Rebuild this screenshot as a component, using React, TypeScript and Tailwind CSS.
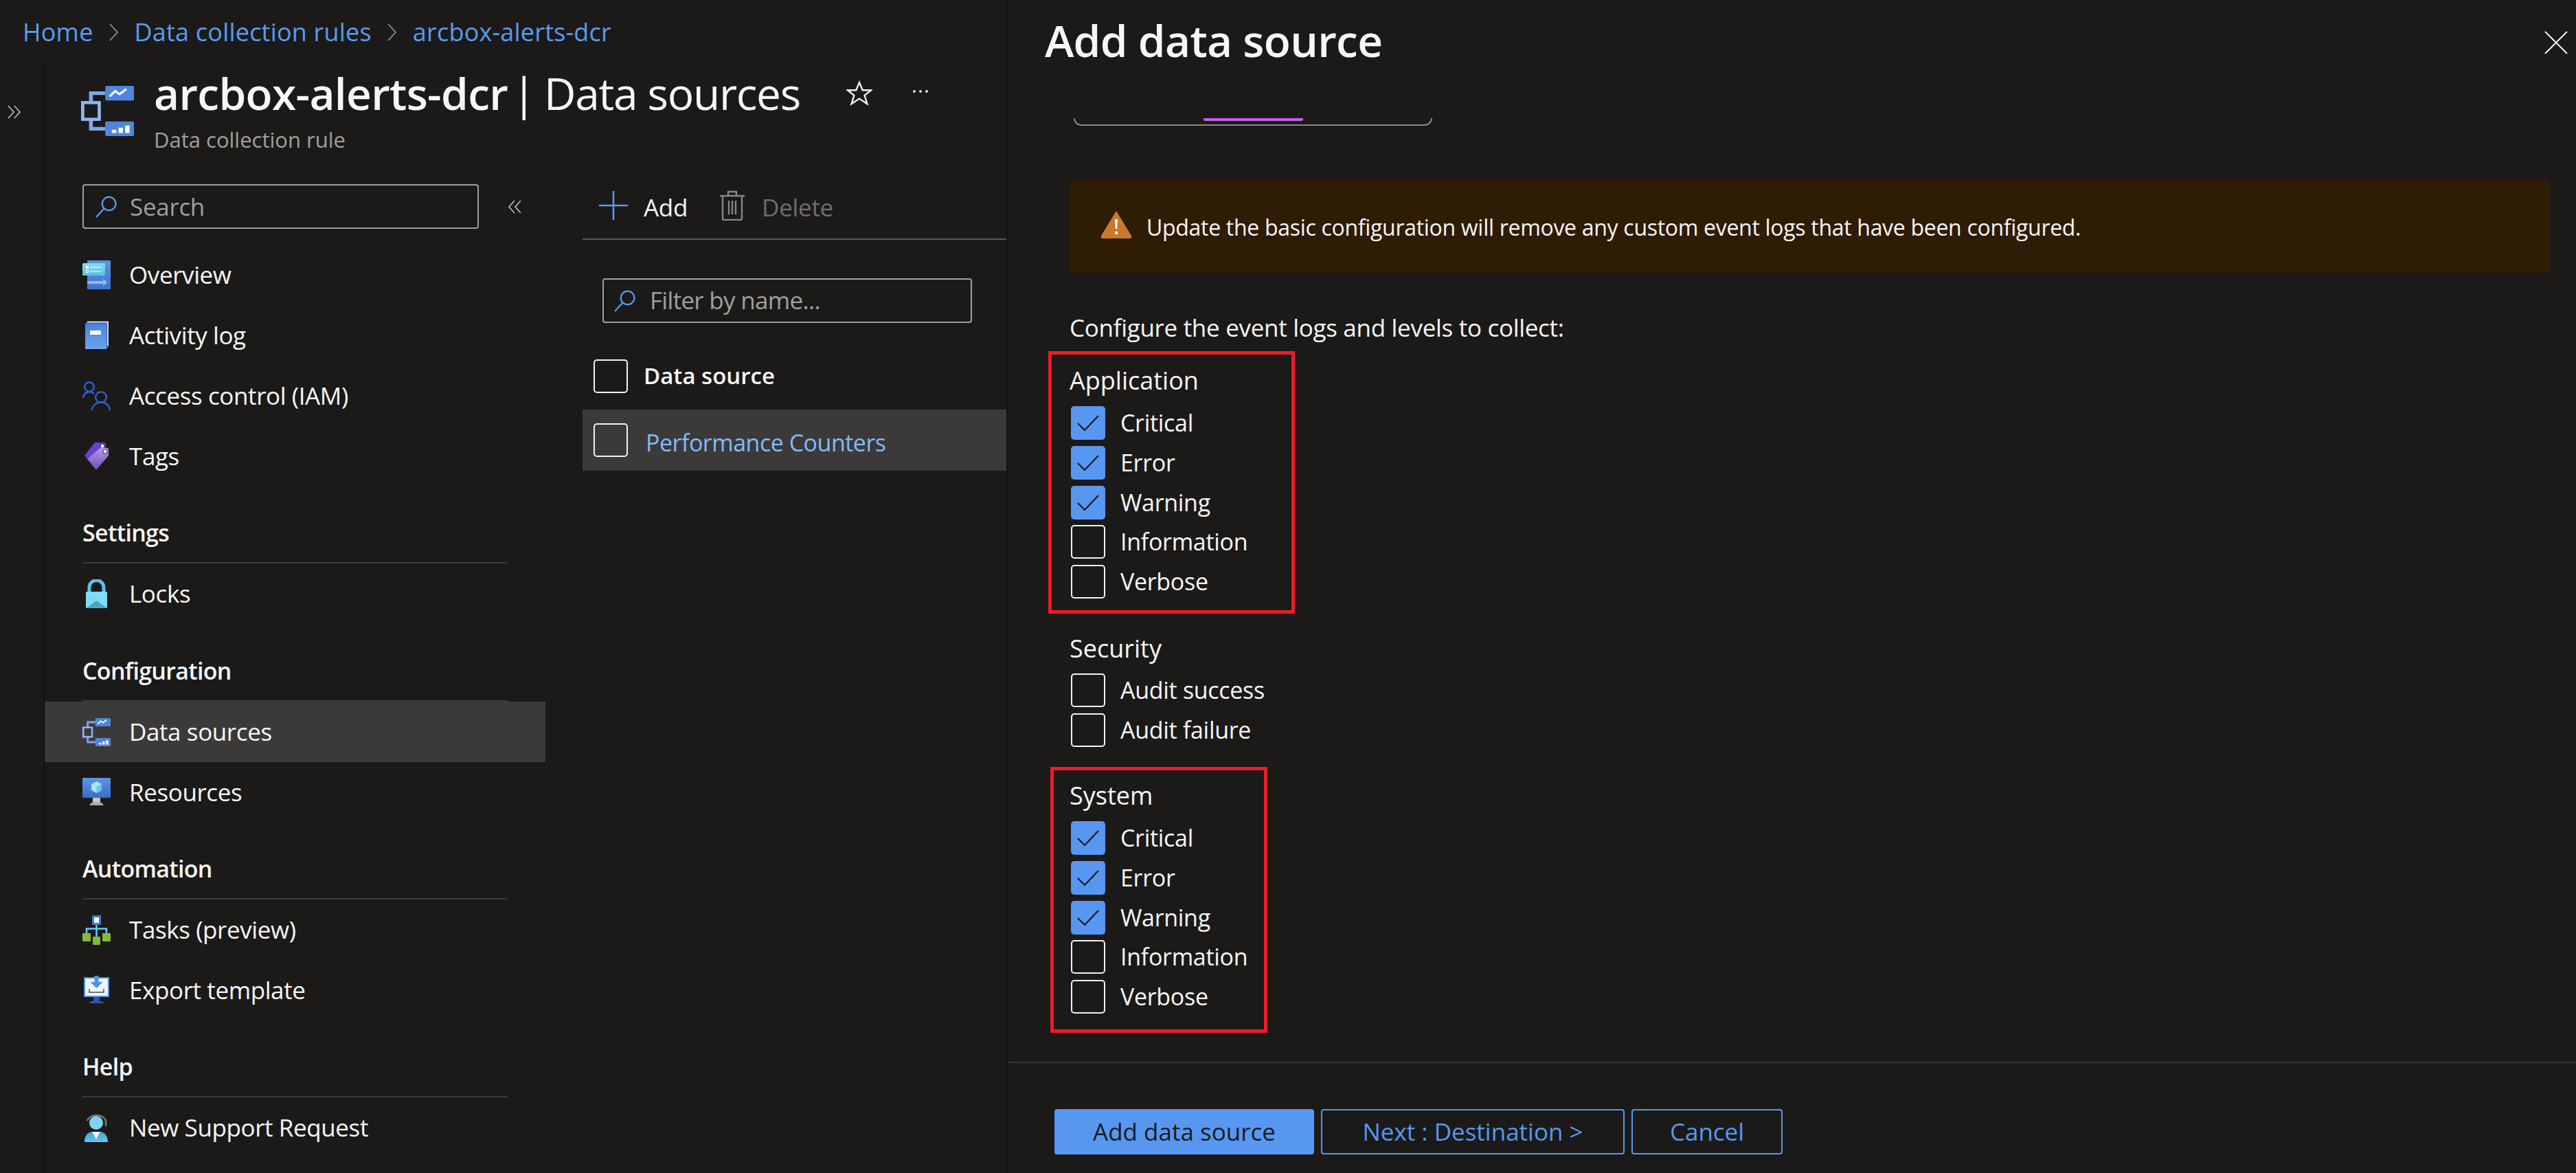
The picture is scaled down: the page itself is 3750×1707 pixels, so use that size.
import React from "react";

const DataRule = ({ c = "w-[41px] h-[41px]" }: { c?: string }) => (
  <svg viewBox="0 0 48 48" className={`${c} shrink-0`} preserveAspectRatio="none">
    <path d="M9 16V7H22M9 32V41H22" fill="none" stroke="#7ea6ea" strokeWidth="3.5" />
    <rect x="1.5" y="16" width="15" height="16" fill="none" stroke="#8fb4ee" strokeWidth="3" />
    <rect x="22" y="0" width="26" height="14" rx="1" fill="#4f86dc" />
    <path d="M26 10l5-5 4 3 6-5" fill="none" stroke="#fff" strokeWidth="2" />
    <rect x="22" y="34" width="26" height="14" rx="1" fill="#4f86dc" />
    <rect x="28" y="42" width="4" height="3" fill="#fff" />
    <rect x="34" y="40" width="4" height="5" fill="#fff" />
    <rect x="40" y="38" width="4" height="7" fill="#fff" />
  </svg>
);

const Overview = () => (
  <svg viewBox="0 0 41 42" className="w-[41px] h-[42px] shrink-0">
    <defs>
      <linearGradient id="ovA" x1="0" y1="0" x2="0" y2="1"><stop offset="0" stopColor="#5a93e6" /><stop offset="1" stopColor="#3f74cc" /></linearGradient>
      <linearGradient id="ovB" x1="0" y1="0" x2="0" y2="1"><stop offset="0" stopColor="#84dcf2" /><stop offset="1" stopColor="#58bfe0" /></linearGradient>
    </defs>
    <rect x="7" y="0" width="34" height="42" rx="1" fill="url(#ovA)" />
    <rect x="0" y="4" width="33" height="18" rx="1.5" fill="url(#ovB)" />
    <rect x="5" y="8" width="4" height="4" fill="#fff" />
    <rect x="5.500" y="14.500" width="3" height="3" fill="none" stroke="#fff" />
    <path d="M11 10h16M11 16h16" stroke="#fff" strokeWidth="1.200" />
    <path d="M7 30h23v-3.500l6 5.500-6 5.500V34H7z" fill="#93b8f0" />
  </svg>
);
const ActivityLog = () => (
  <svg viewBox="0 0 41 42" className="w-[41px] h-[42px] shrink-0">
    <defs>
      <linearGradient id="alA" x1="0" y1="0" x2="0" y2="1"><stop offset="0" stopColor="#4a83da" /><stop offset="1" stopColor="#6ba3ea" /></linearGradient>
    </defs>
    <path d="M7 1h31v37l-4 3H4V4z" fill="#3468bb" />
    <path d="M7 1.500h30V36" fill="none" stroke="#fff" strokeWidth="1.500" />
    <path d="M4 4h31v37H5a1 1 0 0 1-1-1z" fill="url(#alA)" />
    <rect x="11" y="14" width="16" height="6" fill="#fff" />
  </svg>
);
const Access = () => (
  <svg viewBox="0 0 41 42" className="w-[41px] h-[42px] shrink-0" fill="none" stroke="#2f62d0" strokeWidth="2.400">
    <circle cx="10" cy="8" r="6.800" />
    <path d="M1 24a9.500 9.500 0 0 1 16-6" />
    <circle cx="27" cy="23" r="7.800" />
    <path d="M14 42a13 11.500 0 0 1 26 0" />
  </svg>
);
const Tags = () => (
  <svg viewBox="0 0 41 42" className="w-[41px] h-[42px] shrink-0">
    <defs>
      <linearGradient id="tgA" x1="0" y1="0" x2="0" y2="1"><stop offset="0" stopColor="#b69ae4" /><stop offset="1" stopColor="#6e4fb6" /></linearGradient>
    </defs>
    <path d="M18 1h13a3 3 0 0 1 3 3v8L12 30 3 20z" fill="#6a3fd4" />
    <circle cx="29" cy="6" r="3" fill="#fff" stroke="#3f1f98" strokeWidth="1.200" />
    <path d="M27 8l9 1a2 2 0 0 1 2 2v9L20 41 7 25z" fill="url(#tgA)" />
    <circle cx="33" cy="14" r="3" fill="#fff" stroke="#4f2fa6" strokeWidth="1.200" />
  </svg>
);
const Lock = () => (
  <svg viewBox="0 0 41 42" className="w-[41px] h-[42px] shrink-0">
    <path d="M10 20V12a10.500 10.500 0 0 1 21 0v8" fill="none" stroke="#5cc0ea" strokeWidth="5" />
    <rect x="5" y="18" width="31" height="24" rx="1.500" fill="#7fdcf8" />
    <path d="M5 42l15.500-11L36 42z" fill="#4fa5c8" />
  </svg>
);
const Resources = () => (
  <svg viewBox="0 0 41 42" className="w-[41px] h-[42px] shrink-0">
    <defs>
      <linearGradient id="rsA" x1="0" y1="0" x2="0" y2="1"><stop offset="0" stopColor="#5a96ea" /><stop offset="1" stopColor="#3a6cc4" /></linearGradient>
    </defs>
    <rect x="0" y="0" width="41" height="29" rx="1" fill="url(#rsA)" />
    <rect x="15" y="29" width="11" height="7" fill="#c4c4c4" />
    <path d="M13 36h15l3 4H10z" fill="#a8a8a8" />
    <path d="M20.500 5l7.500 4v9l-7.500 4-7.500-4V9z" fill="#a6e4f6" />
    <path d="M20.500 13l7.500-4v9l-7.500 4z" fill="#63c9e8" />
  </svg>
);
const TasksI = () => (
  <svg viewBox="0 0 41 43" className="w-[41px] h-[43px] shrink-0">
    <path d="M20.500 14v18M6 27v-7.500h29V27" fill="none" stroke="#63d0f0" strokeWidth="2.500" />
    <rect x="15.500" y="1.500" width="10" height="11" fill="#fff" stroke="#3d78d8" strokeWidth="3" />
    <rect x="0" y="26" width="12" height="12" rx="1" fill="#84b93e" />
    <rect x="15" y="31" width="11" height="12" rx="1" fill="#84b93e" />
    <rect x="29" y="26" width="12" height="12" rx="1" fill="#84b93e" />
  </svg>
);
const ExportI = () => (
  <svg viewBox="0 0 41 42" className="w-[41px] h-[42px] shrink-0">
    <rect x="3" y="3" width="35" height="27" fill="#eef7fc" stroke="#4f92e6" strokeWidth="2" />
    <rect x="16" y="31" width="9" height="7" fill="#2f55a8" />
    <path d="M10 40h21v-1l-3-2H13l-3 2z" fill="#2f55a8" />
    <path d="M17.500 0h6v9h6l-9 9-9-9h6z" fill="#4f92e6" />
    <path d="M10 19v5h21v-5" fill="none" stroke="#777" strokeWidth="2" />
  </svg>
);
const Support = () => (
  <svg viewBox="0 0 41 42" className="w-[41px] h-[42px] shrink-0">
    <defs>
      <linearGradient id="spA" x1="0" y1="0" x2="0" y2="1"><stop offset="0" stopColor="#3f9dd4" /><stop offset="1" stopColor="#6cc6ea" /></linearGradient>
    </defs>
    <path d="M7 11a14 11 0 0 1 27 0v8" fill="none" stroke="#777" strokeWidth="2.500" />
    <circle cx="20" cy="14" r="10" fill="#7fd3f2" />
    <path d="M3 42c0-11 6-15 12-15h10c6 0 12 4 12 15a1 1 0 0 1-1 0z" fill="url(#spA)" />
    <path d="M14 27h12l-6 11z" fill="#eaf6fb" />
  </svg>
);
const SearchI = ({ c }: { c: string }) => (
  <svg viewBox="0 0 32 32" className={`${c} shrink-0`} fill="none" stroke="#5a9bf0" strokeWidth="2.200">
    <circle cx="20" cy="12" r="9.500" />
    <path d="M13 19L2 31" />
  </svg>
);
const Chevrons = ({ left }: { left?: boolean }) => (
  <svg viewBox="0 0 22 22" className="w-[22px] h-[22px]" fill="none" stroke="#c8c6c4" strokeWidth="1.500">
    {left ? <path d="M10 2L2 11l8 9M19 2l-8 9 8 9" /> : <path d="M2 2l8 9-8 9M11 2l8 9-8 9" />}
  </svg>
);

const NavItem = ({ icon, label, active }: { icon: React.ReactNode; label: string; active?: boolean }) => (
  <div className={`h-[88px] pl-[55px] flex items-center gap-[27px] text-[35px] text-[#f8f7f6] ${active ? "bg-[#3b3a39]" : ""}`}>
    <span className="w-[41px] flex justify-center">{icon}</span>
    <span className="tracking-[-0.4px]">{label}</span>
  </div>
);
const Heading = ({ label, cls }: { label: string; cls: string }) => (
  <div className={`h-[88px] mx-[55px] flex items-center text-[34px] font-semibold tracking-[-0.700px] text-[#f8f7f6] border-b-2 border-[#3d3c3b] ${cls}`}>
    {label}
  </div>
);

const Box = ({ on }: { on?: boolean }) =>
  on ? (
    <span className="w-[50px] h-[49px] rounded-[5px] bg-[#5797f2] shrink-0 flex items-center justify-center">
      <svg viewBox="0 0 50 49" className="w-[50px] h-[49px]" fill="none" stroke="#1b1a19" strokeWidth="2.200">
        <path d="M10 25l10 10 20-21" />
      </svg>
    </span>
  ) : (
    <span className="w-[50px] h-[49px] rounded-[5px] border-2 border-[#f3f2f1] shrink-0" />
  );

const Check = ({ label, on }: { label: string; on?: boolean }) => (
  <div className="h-[49px] flex items-center gap-[22px] text-[34px] tracking-[-0.3px] text-[#f8f7f6]">
    <Box on={on} />
    <span>{label}</span>
  </div>
);

const Levels = () => (
  <div className="flex flex-col gap-[8.800px] pl-[2px]">
    <Check label="Critical" on />
    <Check label="Error" on />
    <Check label="Warning" on />
    <Check label="Information" />
    <Check label="Verbose" />
  </div>
);

export default function App() {
  return (
    <div
      className="w-[3750px] h-[1707px] flex overflow-hidden bg-[#1b1a19] text-[#f8f7f6]"
      style={{ fontFamily: '"Open Sans", "Noto Sans", sans-serif' }}
    >
      {/* Left: portal blade */}
      <div className="w-[1465px] shrink-0 flex flex-col">
        <div className="h-[95px] pl-[33px] flex items-center gap-[22px] text-[36px] tracking-[0.2px] text-[#5a9bf0] pb-[2px]">
          <span>Home</span>
          <svg viewBox="0 0 16 30" className="w-[16px] h-[30px]" fill="none" stroke="#a19f9d" strokeWidth="1.500"><path d="M2 3l11 12L2 27" /></svg>
          <span>Data collection rules</span>
          <svg viewBox="0 0 16 30" className="w-[16px] h-[30px]" fill="none" stroke="#a19f9d" strokeWidth="1.500"><path d="M2 3l11 12L2 27" /></svg>
          <span>arcbox-alerts-dcr</span>
        </div>
        <div className="flex-1 flex min-h-0">
          <div className="w-[65px] shrink-0 border-r-2 border-[#141312] flex justify-center pt-[57px] pr-[22px]">
            <Chevrons />
          </div>
          <div className="flex-1 flex flex-col min-w-0">
            {/* Header */}
            <div className="h-[173px] pl-[53px] flex items-start shrink-0">
              <div className="mt-[30px]">
                <DataRule c="w-[77px] h-[73px]" />
              </div>
              <div className="ml-[29px]">
                <div className="flex items-center h-[75px] mt-[3px] text-[64px] leading-none tracking-[-1.300px] whitespace-nowrap">
                  <span className="font-semibold tracking-[-0.700px]">arcbox-alerts-dcr</span>
                  <span className="ml-[6px] mr-[13px]">|</span>
                  <span>Data sources</span>
                  <svg viewBox="0 0 40 40" className="w-[38px] h-[38px] ml-[67px]" fill="none" stroke="#f3f2f1" strokeWidth="2.500">
                    <path d="M20 3l5 12h13l-10 8 4 13-12-8-12 8 4-13L2 15h13z" />
                  </svg>
                  <span className="ml-[59px] flex gap-[5px] mb-[6px]">
                    <i className="w-[4px] h-[4px] rounded-full bg-[#e1dfdd]" />
                    <i className="w-[4px] h-[4px] rounded-full bg-[#e1dfdd]" />
                    <i className="w-[4px] h-[4px] rounded-full bg-[#e1dfdd]" />
                  </span>
                </div>
                <div className="text-[31px] text-[#a19f9d] mt-[7px]">Data collection rule</div>
              </div>
            </div>
            {/* Body */}
            <div className="flex-1 flex min-h-0">
              <div className="w-[729px] shrink-0">
                <div className="flex items-center pl-[55px] h-[65px]">
                  <div className="w-[577px] h-[65px] rounded-[4px] border-2 border-[#a19f9d] flex items-center pl-[16px] gap-[18px]">
                    <SearchI c="w-[33px] h-[33px]" />
                    <span className="text-[35px] tracking-[-0.3px] text-[#a19f9d] mt-[2px]">Search</span>
                  </div>
                  <span className="ml-[42px]"><Chevrons left /></span>
                </div>
                <div className="mt-[23px]">
                  <NavItem icon={<Overview />} label="Overview" />
                  <NavItem icon={<ActivityLog />} label="Activity log" />
                  <NavItem icon={<Access />} label="Access control (IAM)" />
                  <NavItem icon={<Tags />} label="Tags" />
                  <Heading label="Settings" cls="mt-[24px]" />
                  <NavItem icon={<Lock />} label="Locks" />
                  <Heading label="Configuration" cls="mt-[25px]" />
                  <NavItem icon={<DataRule />} label="Data sources" active />
                  <NavItem icon={<Resources />} label="Resources" />
                  <Heading label="Automation" cls="mt-[24px]" />
                  <NavItem icon={<TasksI />} label="Tasks (preview)" />
                  <NavItem icon={<ExportI />} label="Export template" />
                  <Heading label="Help" cls="mt-[24px]" />
                  <NavItem icon={<Support />} label="New Support Request" />
                </div>
              </div>
              <div className="ml-[54px] flex-1 min-w-0">
                <div className="h-[81px] border-b-2 border-[#5a5958] flex items-start pl-[24px] pt-[10px]">
                  <svg viewBox="0 0 42 42" className="w-[42px] h-[42px]" fill="none" stroke="#5a9bf0" strokeWidth="2.500"><path d="M21 0v42M0 21h42" /></svg>
                  <span className="ml-[23px] text-[35px] tracking-[-0.3px] text-[#f8f7f6] mt-[-2px]">Add</span>
                  <svg viewBox="0 0 36 44" className="w-[36px] h-[44px] ml-[47px] mt-[-1px]" fill="none" stroke="#8a8886" strokeWidth="2.400"><path d="M0 8h36M4 8v33a2 2 0 0 0 2 2h24a2 2 0 0 0 2-2V8M12 8V2h12v6M13 15v20M18 15v20M23 15v20" /></svg>
                  <span className="ml-[25px] text-[35px] tracking-[-0.3px] text-[#6f6e6d] mt-[-2px]">Delete</span>
                </div>
                <div className="mt-[56px] ml-[29px] w-[538px] h-[65px] rounded-[4px] border-2 border-[#a19f9d] flex items-center pl-[14px] gap-[20px]">
                  <SearchI c="w-[33px] h-[33px]" />
                  <span className="text-[35px] tracking-[-0.7px] text-[#a19f9d]">Filter by name...</span>
                </div>
                <div className="mt-[50px] h-[54px] flex items-center pl-[16px] gap-[23px]">
                  <Box />
                  <span className="text-[33px] font-semibold">Data source</span>
                </div>
                <div className="mt-[22px] h-[89px] bg-[#3b3a39] flex items-center pl-[16px] gap-[26px]">
                  <Box />
                  <span className="text-[34px] tracking-[-0.5px] text-[#85b9f6] mt-[7px]">Performance Counters</span>
                </div>
              </div>
            </div>
          </div>
        </div>
      </div>

      {/* Right: side panel */}
      <div className="flex-1 min-w-0 flex flex-col border-l-2 border-[#141312]">
        <div className="h-[118px] shrink-0 flex items-center justify-between pl-[54px] pr-[12px]">
          <span className="text-[64px] font-semibold tracking-[-0.700px]">Add data source</span>
          <svg viewBox="0 0 34 34" className="w-[34px] h-[34px] mt-[6px]" fill="none" stroke="#f3f2f1" strokeWidth="2"><path d="M1 1l32 32M33 1L1 33" /></svg>
        </div>
        <div className="mt-[54px] h-[1373px] shrink-0 overflow-hidden pl-[90px] pr-[38px]">
          <div className="ml-[6px] w-[522px] h-[11px] border-b-2 border-x-2 border-[#8a8886] rounded-b-[20px] flex justify-center">
            <span className="w-[145px] h-[4px] rounded-b-[3px] bg-[#c45ff0]" />
          </div>
          <div className="mt-[78px] h-[136px] rounded-[4px] bg-[#2f1c05] flex items-center pl-[46px] gap-[22px]">
            <svg viewBox="0 0 44 40" className="w-[44px] h-[40px] mb-[4px]">
              <path d="M22 0l22 36a2.500 2.500 0 0 1-2 4H2a2.500 2.500 0 0 1-2-4z" fill="#c87a2a" />
              <path d="M20 12h4l-.8 14h-2.400zM20 30h4v4h-4z" fill="#fff" />
            </svg>
            <span className="text-[32px] tracking-[-0.3px] mt-[3px]">Update the basic configuration will remove any custom event logs that have been configured.</span>
          </div>
          <div className="mt-[56px] h-[48px] flex items-center text-[35px] tracking-[-0.3px]">Configure the event logs and levels to collect:</div>
          <div className="relative mt-[29px]">
            <div className="h-[47px] mb-[14px] flex items-center text-[36px]">Application</div>
            <Levels />
            <div className="absolute top-[-19px] bottom-[-22px] left-[-31px] w-[359px] border-[5px] border-[#ed1c24]" />
          </div>
          <div className="mt-[49px]">
            <div className="h-[47px] mb-[13px] flex items-center text-[36px]">Security</div>
            <div className="flex flex-col gap-[8.800px] pl-[2px]">
              <Check label="Audit success" />
              <Check label="Audit failure" />
            </div>
          </div>
          <div className="relative mt-[48px]">
            <div className="h-[47px] mb-[13px] flex items-center text-[36px]">System</div>
            <Levels />
            <div className="absolute top-[-19px] bottom-[-28px] left-[-28px] w-[316px] border-[5px] border-[#ed1c24]" />
          </div>
        </div>
        <div className="flex-1 border-t-2 border-[#333231] pl-[68px] pt-[67px]">
          <div className="flex h-[66px] text-[35px]">
            <div className="w-[378px] rounded-[4px] bg-[#5797f2] text-[#1b1a19] flex items-center justify-center">Add data source</div>
            <div className="ml-[10px] w-[442px] rounded-[4px] border-2 border-[#5797f2] text-[#5797f2] flex items-center justify-center">Next : Destination &gt;</div>
            <div className="ml-[10px] w-[220px] rounded-[4px] border-2 border-[#5797f2] text-[#5797f2] flex items-center justify-center">Cancel</div>
          </div>
        </div>
      </div>
    </div>
  );
}
